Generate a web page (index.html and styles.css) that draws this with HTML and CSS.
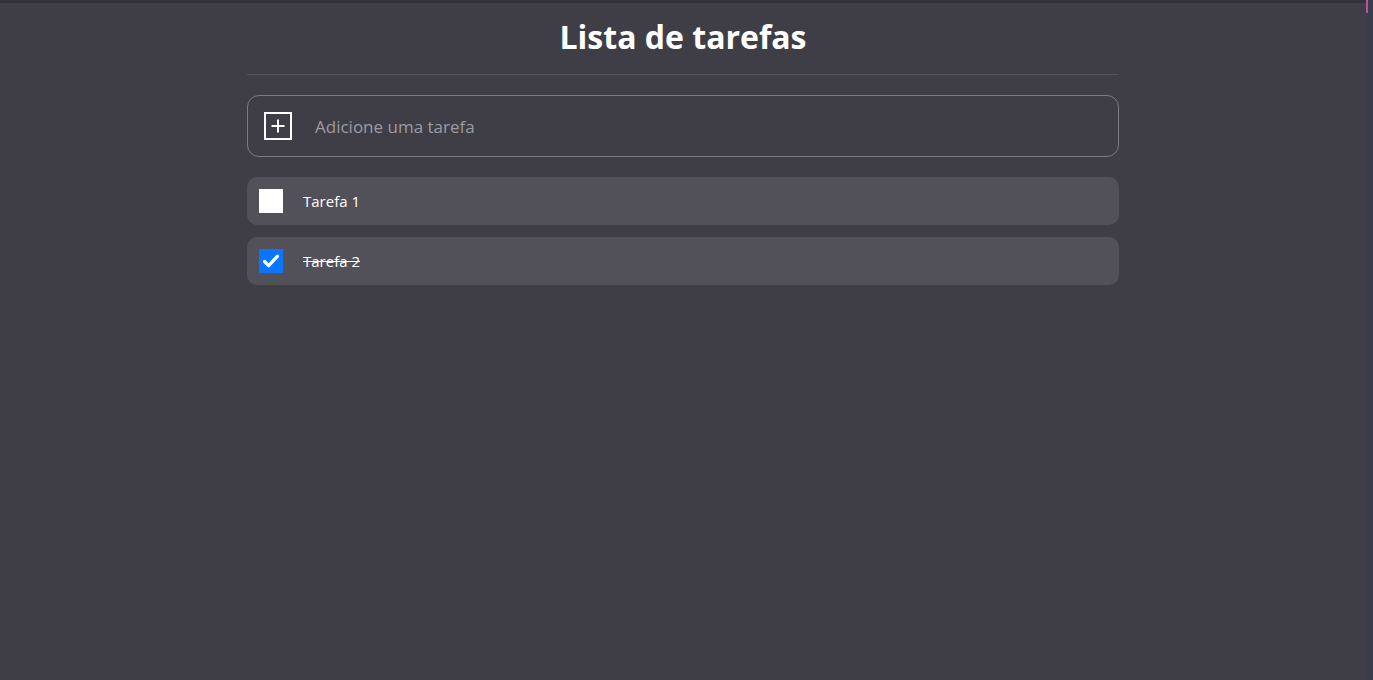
FILE: index.html
```html
<!DOCTYPE html>
<html lang="pt-BR">
<head>
<meta charset="utf-8">
<title>Lista de tarefas</title>
<link rel="stylesheet" href="styles.css">
</head>
<body>
<div class="topbar"></div>
<div class="scrollbar"><div class="thumb"></div></div>
<main class="app">
  <h1 class="title">Lista de tarefas</h1>
  <hr class="divider">
  <label class="add">
    <svg class="add-icon" width="28" height="28" viewBox="0 0 28 28" aria-hidden="true">
      <rect x="1" y="1" width="26" height="26" fill="none" stroke="#ffffff" stroke-width="2"/>
      <path d="M14 7.5v13M7.5 14h13" stroke="#ffffff" stroke-width="2" fill="none"/>
    </svg>
    <input class="add-input" type="text" placeholder="Adicione uma tarefa">
  </label>
  <ul class="tasks">
    <li class="task">
      <span class="box"></span>
      <span class="task-text">Tarefa 1</span>
    </li>
    <li class="task done">
      <span class="box checked">
        <svg width="24" height="24" viewBox="0 0 24 24" aria-hidden="true">
          <path d="M5.5 12.5l4.2 4.2 8.8-9.6" stroke="#ffffff" stroke-width="3.2" fill="none" stroke-linecap="round" stroke-linejoin="round"/>
        </svg>
      </span>
      <span class="task-text">Tarefa 2</span>
    </li>
  </ul>
</main>
</body>
</html>
```
FILE: styles.css
```css
* { box-sizing: border-box; }
html, body { margin: 0; padding: 0; height: 100%; }
body {
  background: #3f3e47;
  font-family: "Open Sans", "Noto Sans", sans-serif;
  color: #ffffff;
  overflow: hidden;
  position: relative;
  padding-right: 7px;
}
.topbar {
  height: 3px;
  background: #33323b;
}
.scrollbar {
  position: absolute;
  top: 0;
  right: 0;
  width: 7px;
  height: 100%;
  background: #3b3c4b;
}
.thumb {
  width: 2px;
  height: 13px;
  background: #b0589a;
}
.app {
  width: 872px;
  margin: 0 auto;
  padding-top: 11px;
}
.title {
  margin: 0;
  text-align: center;
  font-size: 32px;
  line-height: 46px;
  font-weight: 700;
  color: #ffffff;
}
.divider {
  border: 0;
  border-top: 1px solid #55545c;
  margin: 14px 0 20px;
}
.add {
  display: flex;
  align-items: center;
  height: 62px;
  border: 1px solid #7c7b82;
  border-radius: 12px;
  padding: 0 16px;
  gap: 23px;
}
.add-icon { flex: none; }
.add-input {
  flex: 1;
  background: transparent;
  border: 0;
  outline: none;
  font-family: inherit;
  font-size: 17px;
  color: #ffffff;
  padding: 0;
}
.add-input::placeholder { color: #9c9ba2; }
.tasks {
  list-style: none;
  margin: 20px 0 0;
  padding: 0;
  display: flex;
  flex-direction: column;
  gap: 12px;
}
.task {
  display: flex;
  align-items: center;
  height: 48px;
  background: #52515a;
  border-radius: 10px;
  padding: 0 12px;
  gap: 20px;
}
.box {
  width: 24px;
  height: 24px;
  background: #ffffff;
  flex: none;
  display: block;
}
.box.checked { background: #0b75ff; }
.box svg { display: block; }
.task-text {
  font-size: 15px;
  color: #ffffff;
}
.done .task-text { text-decoration: line-through; }
```
